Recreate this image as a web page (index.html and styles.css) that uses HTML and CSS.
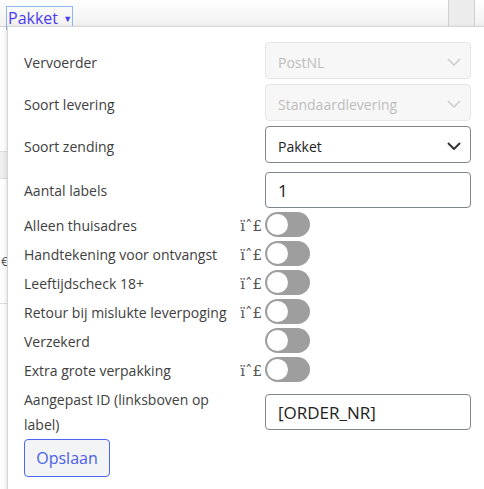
FILE: index.html
```html
<!DOCTYPE html>
<html lang="nl">
<head>
    <meta charset="UTF-8">
    <meta name="viewport" content="width=device-width, initial-scale=1.0">
    <title>Verzendinstellingen</title>
    <link rel="stylesheet" href="styles.css">
</head>
<body>
    <div class="page">
        <div class="header">
            <div class="filter">Pakket <span class="caret">&#9660;</span></div>
            <div class="header-col"></div>
        </div>
        <div class="table">
            <div class="trow"></div>
            <div class="trow"></div>
            <div class="trow grey"></div>
            <div class="trow"><span class="cell-glyph">€</span></div>
            <div class="trow tall"></div>
            <div class="trow grey"></div>
        </div>

        <div class="popup">
            <form class="form">
                <div class="field">
                    <label class="label" for="carrier">Vervoerder</label>
                    <div class="select-wrap">
                        <select id="carrier" class="select" disabled><option>PostNL</option></select>
                        <svg class="chevron" width="14" height="8" viewBox="0 0 14 8"><path d="M1 1l6 6 6-6" fill="none" stroke="currentColor" stroke-width="1.6"/></svg>
                    </div>
                </div>
                <div class="field">
                    <label class="label" for="delivery">Soort levering</label>
                    <div class="select-wrap">
                        <select id="delivery" class="select" disabled><option>Standaardlevering</option></select>
                        <svg class="chevron" width="14" height="8" viewBox="0 0 14 8"><path d="M1 1l6 6 6-6" fill="none" stroke="currentColor" stroke-width="1.6"/></svg>
                    </div>
                </div>
                <div class="field gap-lg">
                    <label class="label" for="shipment">Soort zending</label>
                    <div class="select-wrap active">
                        <select id="shipment" class="select"><option>Pakket</option></select>
                        <svg class="chevron" width="14" height="8" viewBox="0 0 14 8"><path d="M1 1l6 6 6-6" fill="none" stroke="currentColor" stroke-width="2"/></svg>
                    </div>
                </div>
                <div class="field input-field">
                    <label class="label" for="labels">Aantal labels</label>
                    <input id="labels" class="input" type="text" value="1">
                </div>

                <div class="field toggle-row">
                    <span class="label">Alleen thuisadres <span class="info">ïˆ£</span></span>
                    <span class="toggle"><span class="knob"></span></span>
                </div>
                <div class="field toggle-row">
                    <span class="label">Handtekening voor ontvangst <span class="info">ïˆ£</span></span>
                    <span class="toggle"><span class="knob"></span></span>
                </div>
                <div class="field toggle-row">
                    <span class="label">Leeftijdscheck 18+ <span class="info">ïˆ£</span></span>
                    <span class="toggle"><span class="knob"></span></span>
                </div>
                <div class="field toggle-row">
                    <span class="label">Retour bij mislukte leverpoging <span class="info">ïˆ£</span></span>
                    <span class="toggle"><span class="knob"></span></span>
                </div>
                <div class="field toggle-row">
                    <span class="label">Verzekerd</span>
                    <span class="toggle"><span class="knob"></span></span>
                </div>
                <div class="field toggle-row">
                    <span class="label">Extra grote verpakking <span class="info">ïˆ£</span></span>
                    <span class="toggle"><span class="knob"></span></span>
                </div>

                <div class="field custom-id">
                    <label class="label wrap" for="customId">Aangepast ID (linksboven op label)</label>
                    <input id="customId" class="input" type="text" value="[ORDER_NR]">
                </div>

                <button type="button" class="save">Opslaan</button>
            </form>
        </div>
    </div>
</body>
</html>
```

FILE: styles.css
```css
* {
    box-sizing: border-box;
}
body {
    margin: 0;
    font-family: "Open Sans", Arial, sans-serif;
    background: #fff;
    overflow: hidden;
}
.page {
    position: relative;
    width: 484px;
    height: 489px;
    overflow: hidden;
}

/* table in the background */
.header {
    height: 27px;
    background: linear-gradient(#fff, #f1f1f1);
    border-bottom: 1px solid #d0d0d0;
    display: flex;
    align-items: flex-start;
    padding-left: 6px;
}
.filter {
    margin-top: 6px;
    height: 24px;
    width: 67px;
    border: 1px solid #8fb8e6;
    color: #4b3cf0;
    font-size: 16px;
    line-height: 22px;
    padding-left: 1px;
    white-space: nowrap;
}
.caret {
    font-size: 9px;
    vertical-align: 2px;
    margin-left: 1px;
}
.header-col {
    margin-left: auto;
    margin-right: 9px;
    width: 27px;
    height: 26px;
    background: #ececec;
    border-left: 1px solid #cfcfcf;
    border-right: 1px solid #cfcfcf;
}
.table {
    display: flex;
    flex-direction: column;
}
.trow {
    height: 125px;
    border-bottom: 1px solid #dedede;
    position: relative;
}
.trow:first-child {
    height: 0;
    border: none;
}
.trow.grey {
    height: 27px;
    background: #efefef;
}
.trow.tall {
    height: 261px;
}
.cell-glyph {
    position: absolute;
    left: 1px;
    top: 74px;
    font-size: 12px;
    color: #555;
}

/* popup form */
.popup {
    position: absolute;
    left: 7px;
    top: 26px;
    width: 490px;
    height: 470px;
    background: #fff;
    border: 1px solid #d6d6d6;
    box-shadow: -1px 1px 4px rgba(0, 0, 0, 0.12);
    padding: 15px 0 0 16px;
}
.form {
    display: flex;
    flex-direction: column;
}
.field {
    display: grid;
    grid-template-columns: 241px 206px;
    align-items: center;
    height: 37px;
    margin-bottom: 5px;
}
.field.gap-lg {
    margin-bottom: 9px;
}
.label {
    font-size: 14px;
    color: #404040;
    padding-top: 4px;
    display: flex;
    justify-content: space-between;
    align-items: center;
    padding-right: 3px;
}
.info {
    font-family: "DejaVu Serif", serif;
    font-size: 15px;
    color: #555;
}
.select-wrap {
    position: relative;
    height: 37px;
    color: #cdcdcd;
}
.select-wrap.active {
    color: #333;
}
.select {
    appearance: none;
    -webkit-appearance: none;
    width: 100%;
    height: 37px;
    font-family: inherit;
    font-size: 14px;
    padding: 3px 12px 0;
    border-radius: 4px;
    border: 1px solid #e5e5e5;
    background: #f7f7f7;
    color: #bdbdbd;
    opacity: 1;
}
.select-wrap.active .select {
    background: #fff;
    border-color: #80868c;
    color: #222;
}
.chevron {
    position: absolute;
    right: 10px;
    top: 16px;
}
.input-field {
    height: 36px;
    margin-bottom: 4px;
}
.input-field .label {
    padding-top: 0;
}
.input {
    width: 206px;
    height: 36px;
    border: 1px solid #80868c;
    border-radius: 4px;
    padding: 0 12px;
    font-family: inherit;
    font-size: 17px;
    color: #222;
}
.toggle-row {
    height: 25px;
    margin-bottom: 4px;
}
.toggle-row .label {
    padding-top: 2px;
}
.toggle {
    width: 45px;
    height: 25px;
    border-radius: 13px;
    background: #9e9e9e;
    padding: 2px;
    display: flex;
}
.knob {
    width: 21px;
    height: 21px;
    border-radius: 50%;
    background: #fff;
}
.custom-id {
    height: 48px;
    margin-top: 1px;
    margin-bottom: 4px;
}
.label.wrap {
    display: block;
    line-height: 25px;
    padding-top: 0;
    padding-right: 40px;
}
.save {
    width: 86px;
    height: 38px;
    background: #f3f4f6;
    border: 1px solid #4a67f0;
    border-radius: 4px;
    color: #4a5ee8;
    font-family: inherit;
    font-size: 16px;
    cursor: pointer;
}
```
